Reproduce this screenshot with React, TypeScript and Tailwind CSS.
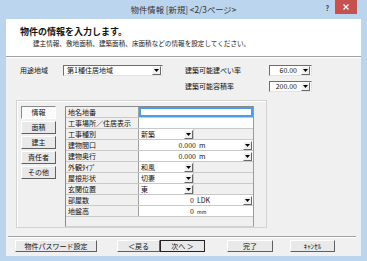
import React from "react";

// Win8-style wizard dialog: 物件情報 [新規] page 2/3

function DropBtn({ className = "" }: { className?: string }) {
  return (
    <div
      className={`w-[9px] h-[9px] shrink-0 bg-[#f0f0f0] border border-t-white border-l-white border-r-[#696969] border-b-[#696969] flex items-center justify-center ${className}`}
    >
      <svg width="5" height="3" viewBox="0 0 5 3">
        <path d="M0 0h5L2.5 3z" fill="#000" />
      </svg>
    </div>
  );
}

function Combo({ width, text, right }: { width: string; text: string; right?: boolean }) {
  return (
    <div className={`${width} h-[11px] bg-white border border-t-[#6d6d6d] border-l-[#6d6d6d] border-r-[#e3e3e3] border-b-[#e3e3e3] flex items-center`}>
      <span className={`flex-1 leading-none text-[7px] ${right ? "text-right pr-[4px]" : "pl-[3px]"}`}>{text}</span>
      <DropBtn className="mr-px" />
    </div>
  );
}

type Row =
  | { label: string; kind: "text"; active?: boolean }
  | { label: string; kind: "select"; value: string }
  | { label: string; kind: "unit"; value: string; unit: string; drop?: boolean; small?: boolean };

const rows: Row[] = [
  { label: "地名地番", kind: "text", active: true },
  { label: "工事場所／住居表示", kind: "text" },
  { label: "工事種別", kind: "select", value: "新築" },
  { label: "建物間口", kind: "unit", value: "0.000", unit: "m", drop: true },
  { label: "建物奥行", kind: "unit", value: "0.000", unit: "m", drop: true },
  { label: "外観ﾀｲﾌﾟ", kind: "select", value: "和風" },
  { label: "屋根形状", kind: "select", value: "切妻" },
  { label: "玄関位置", kind: "select", value: "東" },
  { label: "部屋数", kind: "unit", value: "0", unit: "LDK", drop: true },
  { label: "地盤高", kind: "unit", value: "0", unit: "mm", small: true },
];

function GridRow({ row }: { row: Row }) {
  return (
    <div className="flex h-[11px] border-b border-[#c9c9c9]">
      <div className="w-[73px] shrink-0 border-r border-[#a0a0a0] bg-[#f0f0f0] pl-[2px] text-[7px] leading-[10px] whitespace-nowrap">
        {row.label}
      </div>
      {row.kind === "text" && (
        <div className={`flex-1 bg-white ${row.active ? "border-2 border-[#4a9cf0]" : ""}`} />
      )}
      {row.kind === "select" && (
        <>
          <div className="w-[55px] bg-white flex items-center border-r border-[#c9c9c9]">
            <span className="flex-1 pl-[2px] text-[7px] leading-none">{row.value}</span>
            <DropBtn />
          </div>
          <div className="flex-1 bg-[#f0f0f0]" />
        </>
      )}
      {row.kind === "unit" && (
        <div className="flex-1 bg-white flex items-center">
          <span className={`${row.drop && row.value.length > 1 ? "w-[57px]" : "w-[55px]"} text-right text-[7px] leading-none`}>{row.value}</span>
          <span className={`flex-1 pl-[3px] leading-none ${row.small ? "text-[5px]" : "text-[7px]"}`}>{row.unit}</span>
          {row.drop && <DropBtn className="mr-px" />}
        </div>
      )}
    </div>
  );
}

function Btn({ label, width, primary, className = "" }: { label: string; width: string; primary?: boolean; className?: string }) {
  return (
    <div
      className={`${width} h-[12px] flex items-center justify-center text-[7px] leading-none bg-[#e9e9e9] border ${
        primary ? "border-[#222]" : "border-t-white border-l-white border-r-[#5f5f5f] border-b-[#5f5f5f]"
      } ${className}`}
    >
      {label}
    </div>
  );
}

export default function App() {
  const tabs = ["情報", "面積", "建主", "責任者", "その他"];

  return (
    <div className="w-[367px] h-[261px] bg-[#bcd5ee] flex flex-col font-['Noto_Sans_CJK_JP',sans-serif] text-[#111] overflow-hidden">
      {/* Title bar */}
      <div className="h-[19px] shrink-0 grid grid-cols-[1fr_auto_1fr]">
        <div />
        <div className="pt-[4px] text-[8.3px] leading-[10px] text-[#333]">物件情報 [新規] &lt;2/3ページ&gt;</div>
        <div className="flex justify-end items-start">
          <span className="mt-[4px] mr-[6px] text-[7px] font-bold leading-[8px] text-[#333]">?</span>
          <div className="w-[22px] h-[14px] bg-[#c75050] flex items-center justify-center mr-[10px]">
            <svg width="6" height="6" viewBox="0 0 6 6">
              <path d="M0.5 0.5L5.5 5.5M5.5 0.5L0.5 5.5" stroke="#fff" strokeWidth="1.3" />
            </svg>
          </div>
        </div>
      </div>

      {/* Client area */}
      <div className="flex-1 ml-[6px] mr-[6px] mb-[5px] bg-[#f0f0f0] flex flex-col">
        {/* Header */}
        <div className="h-[37px] shrink-0 bg-white pl-[14px] pt-[7px]">
          <div className="text-[9px] font-bold leading-[12px]">物件の情報を入力します。</div>
          <div className="pl-[13px] text-[6.6px] leading-[10px] text-[#222]">
            建主情報、敷地面積、建築面積、床面積などの情報を設定してください。
          </div>
        </div>
        <div className="h-[2px] shrink-0 border-t border-[#a0a0a0] bg-white" />

        {/* Top fields */}
        <div className="flex items-start pt-[7px]">
          <div className="flex items-center h-[11px] pl-[14px]">
            <span className="w-[43px] text-[7px] leading-none">用途地域</span>
            <Combo width="w-[100px]" text="第1種住居地域" />
          </div>
          <div className="flex flex-col gap-[5px] ml-[22px]">
            <div className="flex items-center h-[11px]">
              <span className="w-[84px] text-[7px] leading-none">建築可能建ぺい率</span>
              <Combo width="w-[43px]" text="60.00" right />
            </div>
            <div className="flex items-center h-[11px]">
              <span className="w-[84px] text-[7px] leading-none">建築可能容積率</span>
              <Combo width="w-[43px]" text="200.00" right />
            </div>
          </div>
        </div>

        {/* Group box */}
        <div className="ml-[10px] mt-[8px] w-[251px] h-[128px] border border-[#d3d3d3] shadow-[inset_1px_1px_0_#fff] pl-[4px] pt-[5px] flex gap-[9px]">
          <div className="flex flex-col gap-[2px]">
            {tabs.map((t, i) => (
              <Btn
                key={t}
                label={t}
                width="w-[35px]"
                className={i === 0 ? "h-[13px] !bg-[#fafafa] !border-t-[#8a8a8a] !border-l-[#8a8a8a] !border-r-white !border-b-white" : "!h-[13px]"}
              />
            ))}
          </div>
          <div className="w-[189px] h-[121px] border border-t-[#8a8a8a] border-l-[#8a8a8a] border-r-[#9a9a9a] border-b-[#d0d0d0] bg-[#f0f0f0]">
            {rows.map((r) => (
              <GridRow key={r.label} row={r} />
            ))}
          </div>
        </div>

        {/* Separator */}
        <div className="mt-[8px] ml-[2px] mr-[5px] h-[2px] border-t border-[#a0a0a0] bg-white" />

        {/* Buttons */}
        <div className="flex mt-[2px] pl-[9px]">
          <Btn label="物件パスワード設定" width="w-[82px]" />
          <Btn label="＜戻る" width="w-[43px]" className="ml-[20px]" />
          <Btn label="次へ ＞" width="w-[45px]" primary />
          <Btn label="完了" width="w-[46px]" className="ml-[22px]" />
          <Btn label="ｷｬﾝｾﾙ" width="w-[45px]" className="ml-[17px]" />
        </div>
      </div>
    </div>
  );
}
